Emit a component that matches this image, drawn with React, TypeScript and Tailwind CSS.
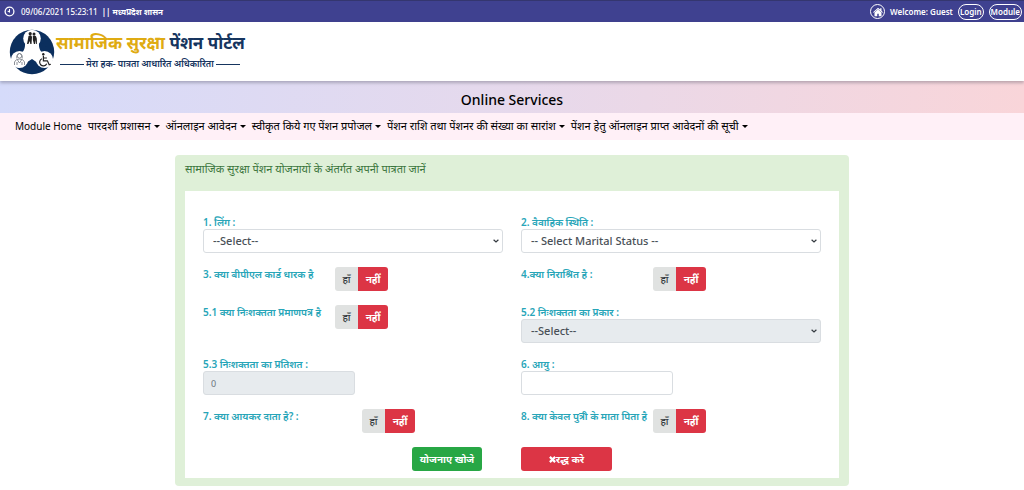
import { useState } from "react";
import type { ReactNode } from "react";

const navItems = [
  "पारदर्शी प्रशासन",
  "ऑनलाइन आवेदन",
  "स्वीकृत किये गए पेंशन प्रपोजल",
  "पेंशन राशि तथा पेंशनर की संख्या का सारांश",
  "पेंशन हेतु ऑनलाइन प्राप्त आवेदनों की सूची",
];

function ClockIcon() {
  return (
    <svg viewBox="0 0 12 12" className="size-[11px]" fill="none" stroke="currentColor" aria-hidden="true">
      <circle cx="6" cy="6" r="4.8" strokeWidth="1.4" />
      <path d="M6 3.4V6.4L4 5.4" strokeWidth="1.1" />
    </svg>
  );
}

function HomeIcon() {
  return (
    <svg viewBox="0 0 12 12" className="size-[10px]" fill="currentColor" aria-hidden="true">
      <path d="M6 .8 0 6.200l.8.800L6 2.600l5.200 4.400.8-.8-1.800-1.700V1.600H8.600v1.500z" />
      <path d="M6 3 1.800 6.600V11.200h3.300V8h1.800v3.200h3.300V6.600z" />
    </svg>
  );
}

function Emblem() {
  return (
    <svg viewBox="0 0 46 46" className="size-[46px] shrink-0" aria-hidden="true">
      <circle cx="23" cy="23" r="22.2" fill="#0b2f5e" />
      <path d="M18 10h10l13 20-5 9L23 30 9 39 5 30z" fill="#fff" />
      <path d="M13 40Q23 27 33 40Q23 47 13 40z" fill="#0b2f5e" />
      <path d="M8 25Q17 25 16 12L5 20zM38 25Q29 25 30 12l11 8z" fill="#0b2f5e" />
      <circle cx="23" cy="9.5" r="8.8" fill="#fff" />
      <circle cx="10.5" cy="30.5" r="8.6" fill="#fff" />
      <circle cx="35.5" cy="30.5" r="8.6" fill="#fff" />
      <g fill="#222">
        <circle cx="21.2" cy="4.7" r="1.6" />
        <circle cx="25" cy="4.9" r="1.5" />
        <path d="M19.500 7q3-2 3.500 1l-.5 7h-1.200l-.5-3-1.400 3H18l1-5z" />
        <path d="M23.800 7q3.400-1.600 4 2.500l.2 5.500h-.8l-.3-4-.8 4h-1.200l-1-4z" />
      </g>
      <g fill="none" stroke="#7f858c" strokeWidth="0.900">
        <circle cx="10.500" cy="26.800" r="2.300" />
        <path d="M7.800 29.500V27q2.700-5 5.400 0v2.500M5.500 36v-3q1-3 5-3t5 3v3M8.500 31l2 3 2-3M8 36v-3M13 36v-3" />
      </g>
      <g fill="none" stroke="#222" strokeWidth="1.200">
        <path d="M34.400 26.800v5h4l1.800 4 1.600-.6M34.400 29h3.500M33 29.800a3.700 3.700 0 1 0 4.700 5" />
      </g>
      <circle cx="34.300" cy="25.200" r="1.200" fill="#222" />
    </svg>
  );
}

function FieldLabel({ htmlFor, children }: { htmlFor: string; children: ReactNode }) {
  return (
    <label htmlFor={htmlFor} className="block h-[14px] text-[10px] leading-[14px] font-semibold whitespace-nowrap text-[#27a5b8]">
      {children}
    </label>
  );
}

function SelectField({ id, label, placeholder, disabled }: { id: string; label: string; placeholder: string; disabled?: boolean }) {
  return (
    <div>
      <FieldLabel htmlFor={id}>{label}</FieldLabel>
      <div className="grid items-center">
        <select
          id={id}
          disabled={disabled}
          className="col-start-1 row-start-1 h-6 w-full appearance-none rounded-[3px] border border-[#d9dde1] bg-white px-[9px] text-[11px] font-medium text-[#495057] opacity-100 disabled:bg-[#e7ebee]"
        >
          <option>{placeholder}</option>
        </select>
        <svg viewBox="0 0 6 4" className="pointer-events-none col-start-1 row-start-1 mr-1 h-1 w-1.5 justify-self-end" fill="none" stroke="#343a40" strokeWidth="1.200" aria-hidden="true">
          <path d="m.6.7 2.400 2.300L5.400.7" />
        </svg>
      </div>
    </div>
  );
}

function TextField({ id, label, value, disabled }: { id: string; label: string; value?: string; disabled?: boolean }) {
  return (
    <div>
      <FieldLabel htmlFor={id}>{label}</FieldLabel>
      <input
        id={id}
        type="text"
        defaultValue={value}
        disabled={disabled}
        className="block h-6 w-[152px] rounded-[3px] border border-[#d9dde1] bg-white px-[7px] text-[9px] text-[#6c757d] disabled:bg-[#e7ebee]"
      />
    </div>
  );
}

function YesNo({ id, label, wide }: { id: string; label: string; wide?: boolean }) {
  const [yes, setYes] = useState(false);
  const on = "bg-[#dc3545] text-white font-bold";
  const off = "bg-[#e0e2e1] text-[#343a40] font-medium";
  return (
    <div role="group" aria-labelledby={id} className="flex items-start">
      <span id={id} className={`${wide ? "w-[159px]" : "w-[132px]"} shrink-0 text-[10px] leading-[14px] font-semibold whitespace-nowrap text-[#27a5b8]`}>
        {label}
      </span>
      <button type="button" aria-pressed={yes} onClick={() => setYes(true)} className={`h-6 w-[23px] rounded-l-[3px] text-[10px] ${yes ? on : off}`}>
        हाँ
      </button>
      <button type="button" aria-pressed={!yes} onClick={() => setYes(false)} className={`h-6 w-[30px] rounded-r-[3px] text-[10px] ${yes ? off : on}`}>
        नहीं
      </button>
    </div>
  );
}

export default function App() {
  return (
    <div className="min-h-screen bg-white font-['Noto_Sans','Noto_Sans_Devanagari',sans-serif] text-black">
      <div className="flex h-[22px] items-center justify-between border-t border-[#34366f] bg-[#3f4190] pr-[2px] pl-1 text-white">
        <div className="flex items-center text-[8px] font-medium">
          <ClockIcon />
          <span className="ml-[6px]">09/06/2021 15:23:11</span>
          <span className="ml-1 font-bold">|| मध्यप्रदेश शासन</span>
        </div>
        <div className="flex items-center gap-[5px] text-[8px] font-semibold">
          <a href="#home" aria-label="Home" className="flex size-[15px] items-center justify-center rounded-full border border-white">
            <HomeIcon />
          </a>
          <span>Welcome: Guest</span>
          <a href="#login" className="flex h-4 items-center rounded-full border border-white px-px">Login</a>
          <a href="#module" className="flex h-4 items-center rounded-full border border-white px-px">Module</a>
        </div>
      </div>

      <header className="relative flex h-[59px] items-start bg-white pt-[7px] pl-[9px] shadow-[0_2px_3px_rgba(70,70,90,0.35)]">
        <Emblem />
        <div className="flex flex-col pl-px">
          <h1 className="text-[17px] leading-[28px] font-bold whitespace-nowrap text-[#16355f]">
            <span className="text-[#dfab12]">सामाजिक सुरक्षा</span> पेंशन पोर्टल
          </h1>
          <p className="flex items-center gap-[2px] pl-1 text-[9px] leading-[14px] font-semibold whitespace-nowrap text-[#16355f]">
            <span className="h-px w-6 bg-[#16355f]" />
            मेरा हक- पात्रता आधारित अधिकारिता
            <span className="h-px w-6 bg-[#16355f]" />
          </p>
        </div>
      </header>

      <div className="flex h-8 items-center justify-center bg-linear-to-r from-[#d5dbfa] via-[#e6d9ec] to-[#f9d5d9] pt-[6px]">
        <h2 className="text-[14px] leading-4 font-medium">Online Services</h2>
      </div>

      <nav className="flex h-[27px] items-center gap-[6px] bg-[#fff0f7] pl-[15px] text-[11px] whitespace-nowrap">
        <a href="#module-home" className="text-[10px]">Module Home</a>
        {navItems.map((item) => (
          <button key={item} type="button" className="flex items-center gap-[3px]">
            {item}
            <span className="border-x-[3px] border-t-[3px] border-x-transparent border-t-black" />
          </button>
        ))}
      </nav>

      <main className="px-[175px] pt-[15px] pb-1">
        <form className="rounded-[4px] bg-[#dff0d8] px-[10px] pb-2" onSubmit={(e) => e.preventDefault()}>
          <h3 className="h-9 pt-[6px] text-[11px] leading-4 font-normal text-[#3c763d]">
            सामाजिक सुरक्षा पेंशन योजनायों के अंतर्गत अपनी पात्रता जानें
          </h3>
          <div className="grid grid-cols-2 gap-x-[18px] gap-y-[14px] bg-white px-[18px] pt-6 pb-[7px]">
            <SelectField id="gender" label="1. लिंग :" placeholder="--Select--" />
            <SelectField id="marital" label="2. वैवाहिक स्थिति :" placeholder="-- Select Marital Status --" />
            <YesNo id="bpl" label="3. क्या बीपीएल कार्ड धारक है" />
            <YesNo id="destitute" label="4.क्या निराश्रित है :" />
            <YesNo id="certificate" label="5.1 क्या निःशक्तता प्रमाणपत्र है" />
            <SelectField id="disability" label="5.2 निःशक्तता का प्रकार :" placeholder="--Select--" disabled />
            <TextField id="percent" label="5.3 निःशक्तता का प्रतिशत :" value="0" disabled />
            <TextField id="age" label="6. आयु :" />
            <YesNo id="tax" label="7. क्या आयकर दाता है? :" wide />
            <YesNo id="daughter" label="8. क्या केवल पुत्री के माता पिता है" />
            <div className="flex justify-end pr-[21px]">
              <button type="submit" className="h-6 w-[70px] rounded-[3px] bg-[#28a745] text-[10px] font-bold whitespace-nowrap text-white">
                योजनाए खोजे
              </button>
            </div>
            <button type="reset" className="flex h-6 w-[91px] items-center justify-center rounded-[3px] bg-[#dc3545] text-[10px] font-bold text-white">
              <svg viewBox="0 0 8 8" className="size-[7px]" stroke="currentColor" strokeWidth="2.500" aria-hidden="true">
                <path d="m1 1 6 6M7 1 1 7" />
              </svg>
              रद्ध करे
            </button>
          </div>
        </form>
      </main>
    </div>
  );
}
